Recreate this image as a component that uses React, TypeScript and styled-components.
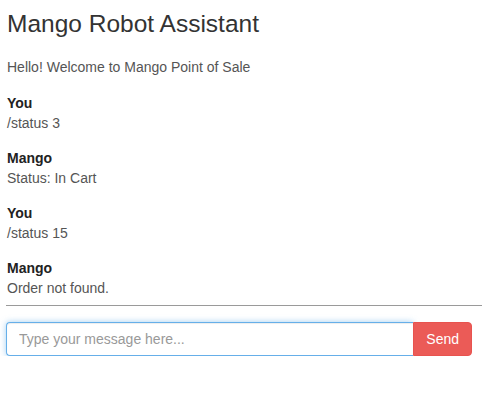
import React from "react";
import styled, { createGlobalStyle } from "styled-components";

const Global = createGlobalStyle`
  html, body { margin: 0; padding: 0; background: #fff; }
  body {
    font-family: "Liberation Sans", Arial, Helvetica, sans-serif;
    font-size: 14px;
    line-height: 20px;
    color: #333;
  }
  * { box-sizing: border-box; }
`;

const Page = styled.div`
  padding: 0 6px;
  display: flex;
  flex-direction: column;
`;

const Title = styled.h3`
  margin: 10px 0 0 1px;
  font-size: 24.5px;
  font-weight: 400;
  line-height: 28px;
  color: #333;
`;

const Log = styled.div`
  display: flex;
  flex-direction: column;
  gap: 15px;
  margin-top: 19px;
`;

const Greeting = styled.p`
  margin: 0 0 1px 1px;
  color: #555;
`;

const Message = styled.div`
  display: flex;
  flex-direction: column;
  margin-left: 1px;
`;

const Author = styled.strong`
  font-weight: 700;
  color: #222;
`;

const Body = styled.span`
  color: #555;
`;

const Rule = styled.hr`
  margin: 7px 0 16px;
  border: 0;
  border-top: 1px solid #9a9a9a;
  height: 0;
`;

const Form = styled.form`
  display: flex;
  padding-right: 10px;
  margin: 0;
`;

const Input = styled.input`
  flex: 1;
  height: 34px;
  padding: 6px 12px;
  font-family: inherit;
  font-size: 14px;
  color: #555;
  background: #fff;
  border: 1px solid #66afe9;
  border-right: 0;
  border-radius: 4px 0 0 4px;
  outline: 0;
  box-shadow: inset 0 1px 1px rgba(0, 0, 0, 0.075), 0 0 6px rgba(102, 175, 233, 0.6);
  &::placeholder { color: #999; }
`;

const SendButton = styled.button`
  height: 34px;
  padding: 6px 12px;
  font-family: inherit;
  font-size: 14px;
  line-height: 20px;
  color: #fff;
  background: #eb5b57;
  border: 1px solid #e8534f;
  border-radius: 0 4px 4px 0;
  cursor: pointer;
`;

const messages = [
  { author: "You", text: "/status 3" },
  { author: "Mango", text: "Status: In Cart" },
  { author: "You", text: "/status 15" },
  { author: "Mango", text: "Order not found." },
];

export default function App() {
  return (
    <>
      <Global />
      <Page>
        <Title>Mango Robot Assistant</Title>
        <Log>
          <Greeting>Hello! Welcome to Mango Point of Sale</Greeting>
          {messages.map((m, i) => (
            <Message key={i}>
              <Author>{m.author}</Author>
              <Body>{m.text}</Body>
            </Message>
          ))}
        </Log>
        <Rule />
        <Form onSubmit={(e) => e.preventDefault()}>
          <Input autoFocus placeholder="Type your message here..." />
          <SendButton type="submit">Send</SendButton>
        </Form>
      </Page>
    </>
  );
}
